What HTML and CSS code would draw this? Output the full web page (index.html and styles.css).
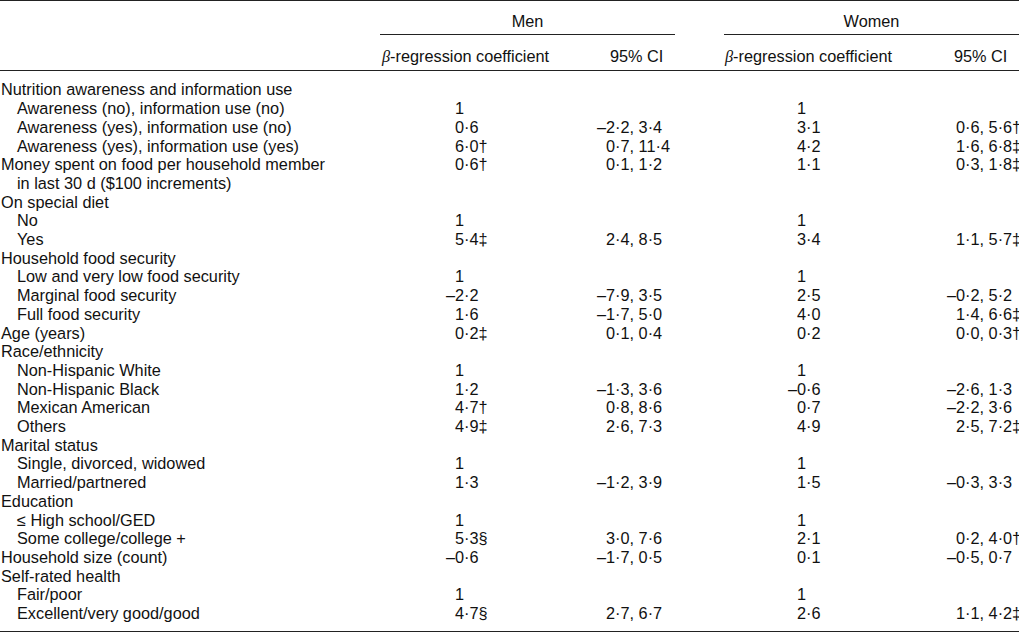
FILE: index.html
```html
<!DOCTYPE html>
<html lang="en">
<head>
<meta charset="utf-8">
<title>Regression table</title>
<link rel="stylesheet" href="styles.css">
</head>
<body>
<table class="tbl">
  <colgroup>
    <col class="c-label">
    <col class="c-coef">
    <col class="c-ci">
    <col class="c-gap">
    <col class="c-coef2">
    <col class="c-ci2">
  </colgroup>
  <thead>
    <tr class="h1">
      <th></th>
      <th colspan="2" class="grp">Men</th>
      <th></th>
      <th colspan="2" class="grp">Women</th>
    </tr>
    <tr class="h2">
      <th></th>
      <th class="hcoef"><i class="beta">β</i>-regression coefficient</th>
      <th class="hci">95% CI</th>
      <th></th>
      <th class="hcoef2"><i class="beta">β</i>-regression coefficient</th>
      <th class="hci2">95% CI</th>
    </tr>
  </thead>
  <tbody>
    <tr class="first"><td class="lab">Nutrition awareness and information use</td><td class="v"></td><td class="ci"></td><td></td><td class="v2"></td><td class="ci2"></td></tr>
    <tr><td class="lab sub">Awareness (no), information use (no)</td><td class="v">1</td><td class="ci"></td><td></td><td class="v2">1</td><td class="ci2"></td></tr>
    <tr><td class="lab sub">Awareness (yes), information use (no)</td><td class="v">0·6</td><td class="ci"><span class="m">–</span>2·2, 3·4</td><td></td><td class="v2">3·1</td><td class="ci2">0·6, 5·6†</td></tr>
    <tr><td class="lab sub">Awareness (yes), information use (yes)</td><td class="v">6·0†</td><td class="ci">0·7, 11·4</td><td></td><td class="v2">4·2</td><td class="ci2">1·6, 6·8‡</td></tr>
    <tr><td class="lab">Money spent on food per household member</td><td class="v">0·6†</td><td class="ci">0·1, 1·2</td><td></td><td class="v2">1·1</td><td class="ci2">0·3, 1·8‡</td></tr>
    <tr><td class="lab sub">in last 30 d ($100 increments)</td><td class="v"></td><td class="ci"></td><td></td><td class="v2"></td><td class="ci2"></td></tr>
    <tr><td class="lab">On special diet</td><td class="v"></td><td class="ci"></td><td></td><td class="v2"></td><td class="ci2"></td></tr>
    <tr><td class="lab sub">No</td><td class="v">1</td><td class="ci"></td><td></td><td class="v2">1</td><td class="ci2"></td></tr>
    <tr><td class="lab sub">Yes</td><td class="v">5·4‡</td><td class="ci">2·4, 8·5</td><td></td><td class="v2">3·4</td><td class="ci2">1·1, 5·7‡</td></tr>
    <tr><td class="lab">Household food security</td><td class="v"></td><td class="ci"></td><td></td><td class="v2"></td><td class="ci2"></td></tr>
    <tr><td class="lab sub">Low and very low food security</td><td class="v">1</td><td class="ci"></td><td></td><td class="v2">1</td><td class="ci2"></td></tr>
    <tr><td class="lab sub">Marginal food security</td><td class="v"><span class="m">–</span>2·2</td><td class="ci"><span class="m">–</span>7·9, 3·5</td><td></td><td class="v2">2·5</td><td class="ci2"><span class="m">–</span>0·2, 5·2</td></tr>
    <tr><td class="lab sub">Full food security</td><td class="v">1·6</td><td class="ci"><span class="m">–</span>1·7, 5·0</td><td></td><td class="v2">4·0</td><td class="ci2">1·4, 6·6‡</td></tr>
    <tr><td class="lab">Age (years)</td><td class="v">0·2‡</td><td class="ci">0·1, 0·4</td><td></td><td class="v2">0·2</td><td class="ci2">0·0, 0·3†</td></tr>
    <tr><td class="lab">Race/ethnicity</td><td class="v"></td><td class="ci"></td><td></td><td class="v2"></td><td class="ci2"></td></tr>
    <tr><td class="lab sub">Non-Hispanic White</td><td class="v">1</td><td class="ci"></td><td></td><td class="v2">1</td><td class="ci2"></td></tr>
    <tr><td class="lab sub">Non-Hispanic Black</td><td class="v">1·2</td><td class="ci"><span class="m">–</span>1·3, 3·6</td><td></td><td class="v2"><span class="m">–</span>0·6</td><td class="ci2"><span class="m">–</span>2·6, 1·3</td></tr>
    <tr><td class="lab sub">Mexican American</td><td class="v">4·7†</td><td class="ci">0·8, 8·6</td><td></td><td class="v2">0·7</td><td class="ci2"><span class="m">–</span>2·2, 3·6</td></tr>
    <tr><td class="lab sub">Others</td><td class="v">4·9‡</td><td class="ci">2·6, 7·3</td><td></td><td class="v2">4·9</td><td class="ci2">2·5, 7·2‡</td></tr>
    <tr><td class="lab">Marital status</td><td class="v"></td><td class="ci"></td><td></td><td class="v2"></td><td class="ci2"></td></tr>
    <tr><td class="lab sub">Single, divorced, widowed</td><td class="v">1</td><td class="ci"></td><td></td><td class="v2">1</td><td class="ci2"></td></tr>
    <tr><td class="lab sub">Married/partnered</td><td class="v">1·3</td><td class="ci"><span class="m">–</span>1·2, 3·9</td><td></td><td class="v2">1·5</td><td class="ci2"><span class="m">–</span>0·3, 3·3</td></tr>
    <tr><td class="lab">Education</td><td class="v"></td><td class="ci"></td><td></td><td class="v2"></td><td class="ci2"></td></tr>
    <tr><td class="lab sub">≤ High school/GED</td><td class="v">1</td><td class="ci"></td><td></td><td class="v2">1</td><td class="ci2"></td></tr>
    <tr><td class="lab sub">Some college/college +</td><td class="v">5·3§</td><td class="ci">3·0, 7·6</td><td></td><td class="v2">2·1</td><td class="ci2">0·2, 4·0†</td></tr>
    <tr><td class="lab">Household size (count)</td><td class="v"><span class="m">–</span>0·6</td><td class="ci"><span class="m">–</span>1·7, 0·5</td><td></td><td class="v2">0·1</td><td class="ci2"><span class="m">–</span>0·5, 0·7</td></tr>
    <tr><td class="lab">Self-rated health</td><td class="v"></td><td class="ci"></td><td></td><td class="v2"></td><td class="ci2"></td></tr>
    <tr><td class="lab sub">Fair/poor</td><td class="v">1</td><td class="ci"></td><td></td><td class="v2">1</td><td class="ci2"></td></tr>
    <tr class="last"><td class="lab sub">Excellent/very good/good</td><td class="v">4·7§</td><td class="ci">2·7, 6·7</td><td></td><td class="v2">2·6</td><td class="ci2">1·1, 4·2‡</td></tr>
  </tbody>
</table>
</body>
</html>
```

FILE: styles.css
```css
html, body {
  margin: 0;
  padding: 0;
  background: #ffffff;
}

body {
  font-family: "Liberation Sans", Arial, Helvetica, sans-serif;
  font-size: 16.3px;
  color: #111111;
}

.tbl {
  width: 1019px;
  border-collapse: collapse;
  border-spacing: 0;
  table-layout: fixed;
  border-top: 1px solid #222222;
  border-bottom: 1px solid #222222;
}

.c-label { width: 380px; }
.c-coef { width: 220px; }
.c-ci { width: 75px; }
.c-gap { width: 49px; }
.c-coef2 { width: 221px; }
.c-ci2 { width: 74px; }

th, td {
  padding: 0;
  font-weight: normal;
  line-height: 18.7px;
  white-space: nowrap;
  text-align: left;
  vertical-align: top;
}

.h1 th {
  padding-top: 11px;
  padding-bottom: 3px;
}

.h1 .grp {
  text-align: center;
  border-bottom: 1px solid #222222;
}

.h2 th {
  padding-top: 12px;
  padding-bottom: 4px;
  border-bottom: 1px solid #222222;
}

.beta {
  font-family: "Liberation Serif", "Times New Roman", serif;
  font-style: italic;
}

.hcoef { padding-left: 2px; }
.hci { padding-left: 10px; }
.hcoef2 { padding-left: 1px; }
.hci2 { padding-left: 9px; }

.first td { padding-top: 9px; }
.last td { padding-bottom: 8px; }

.lab { padding-left: 1px; }
.lab.sub { padding-left: 17px; }

.v { padding-left: 75px; }
.ci { padding-left: 6px; }
.v2 { padding-left: 73px; }
.ci2 { padding-left: 11px; }

.m {
  margin-left: -0.556em;
}
```
